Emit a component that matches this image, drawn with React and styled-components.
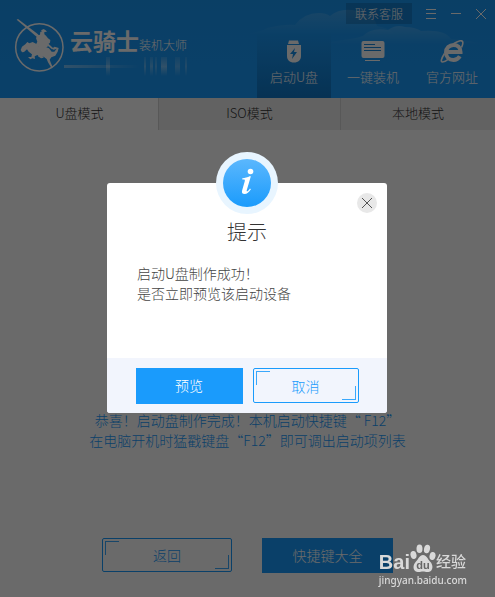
import React from 'react';
import styled, { createGlobalStyle } from 'styled-components';

const GlobalStyle = createGlobalStyle`
  * {
    box-sizing: border-box;
  }

  body {
    background: #fff;
    font-family: "Noto Sans CJK SC", sans-serif;
    font-weight: 300;
    margin: 0;
  }

  button {
    cursor: pointer;
    font-family: inherit;
    font-weight: inherit;
    margin: 0;
    padding: 0;
  }
`;

const Page = styled.div`
  display: flex;
  flex-direction: column;
  min-height: 100vh;
`;

const Header = styled.header`
  background: linear-gradient(#1a98f4, #1a9bfc);
  color: #fff;
  display: flex;
  height: 98px;
  isolation: isolate;
  justify-content: space-between;
  position: relative;
`;

const Sky = styled.svg`
  position: absolute;
  right: 0;
  top: 0;
  z-index: -1;
`;

const Brand = styled.div`
  display: flex;
  padding: 18px 0 0 14px;
`;

const BrandText = styled.div`
  margin-top: 10px;
`;

const BrandName = styled.h1`
  align-items: baseline;
  display: flex;
  font-size: 12px;
  font-weight: 300;
  line-height: 24px;
  margin: 0;
  padding-left: 6px;

  strong {
    font-size: 23px;
    font-weight: 700;
  }
`;

const Glow = styled.svg`
  display: block;
`;

const HeaderSide = styled.div`
  align-items: flex-end;
  display: flex;
  flex-direction: column;
  justify-content: space-between;
`;

const WindowBar = styled.div`
  align-items: center;
  display: flex;
  gap: 13px;
  padding: 3px 8px 0 0;
`;

const SupportButton = styled.button`
  background: rgba(0, 40, 80, 0.22);
  border: 0;
  color: #fff;
  font-size: 12px;
  height: 21px;
  line-height: 20px;
  width: 66px;
`;

const WindowButton = styled.button`
  background: none;
  border: 0;
  color: #fff;
  display: block;
  height: 12px;
  width: 12px;

  svg {
    display: block;
  }
`;

const Nav = styled.nav`
  display: flex;
  gap: 5px;
  padding-right: 6px;
`;

const NavLink = styled.a`
  align-items: center;
  background: ${props => props.$active ? 'linear-gradient(rgba(0, 60, 110, 0), rgba(0, 60, 110, 0.36))' : 'none'};
  color: #fff;
  display: flex;
  flex-direction: column;
  font-size: 13px;
  height: 66px;
  line-height: 20px;
  padding-top: 8px;
  text-decoration: none;
  width: 74px;

  svg {
    margin-bottom: 4px;
  }
`;

const Tabs = styled.div`
  display: grid;
  grid-template-columns: 158fr 182fr 155fr;
`;

const Tab = styled.button`
  background: ${props => props.$active ? '#fff' : '#ececec'};
  border: 0;
  border-left: 1px solid ${props => props.$active ? '#fff' : '#d4d4d4'};
  color: #333;
  font-size: 13px;
  height: 32px;
  line-height: 30px;
  padding-bottom: 2px;
`;

const Content = styled.main`
  align-items: center;
  display: flex;
  flex: 1;
  flex-direction: column;
  justify-content: flex-end;
  padding-bottom: 24px;
`;

const Tip = styled.p`
  color: #1a9bfc;
  font-size: 14px;
  line-height: 20px;
  margin: 0 0 88px;
  text-align: center;
`;

const Actions = styled.div`
  display: flex;
  gap: ${props => props.$gap};
  justify-content: center;
`;

const PrimaryButton = styled.button`
  background: #1a9bfc;
  border: 0;
  color: #fff;
  font-size: 14px;
  height: ${props => props.$wide ? '35px' : '36px'};
  padding-bottom: 2px;
  width: ${props => props.$wide ? '131px' : '107px'};
`;

const OutlineButton = styled.button`
  background: transparent;
  border: 1px solid #1a9bfc;
  border-radius: 2px;
  color: #1a9bfc;
  font-size: 14px;
  height: ${props => props.$wide ? '34px' : '35px'};
  position: relative;
  width: ${props => props.$wide ? '130px' : '106px'};

  &::before,
  &::after {
    border: 0 solid #1a9bfc;
    content: '';
    height: 13px;
    opacity: 0.85;
    position: absolute;
    width: 13px;
  }

  &::before {
    border-width: 1px 0 0 1px;
    left: 2px;
    top: 2px;
  }

  &::after {
    border-width: 0 1px 1px 0;
    bottom: 2px;
    right: 2px;
  }
`;

const Backdrop = styled.div`
  align-items: center;
  background: rgba(0, 0, 0, 0.585);
  display: flex;
  inset: 0;
  justify-content: center;
  padding: 0 1px 1px 0;
  position: fixed;
`;

const Dialog = styled.section`
  background: #fff;
  border-radius: 3px;
  position: relative;
  width: 280px;
`;

const Badge = styled.svg`
  left: 50%;
  position: absolute;
  top: -31px;
  transform: translateX(-50%);
`;

const CloseButton = styled.button`
  background: #e8e8e8;
  border: 0;
  border-radius: 50%;
  color: #555;
  height: 20px;
  position: absolute;
  right: 10px;
  top: 10px;
  width: 20px;

  svg {
    display: block;
    margin: 0 auto;
  }
`;

const DialogBody = styled.div`
  padding: 35px 30px 55px;
`;

const DialogTitle = styled.h2`
  color: #333;
  font-size: 20px;
  font-weight: 300;
  line-height: 28px;
  margin: 0 0 17px;
  text-align: center;
`;

const DialogText = styled.p`
  color: #444;
  font-size: 14px;
  line-height: 20px;
  margin: 0;
`;

const DialogFooter = styled.footer`
  background: #f2f5fd;
  border-radius: 0 0 3px 3px;
  padding: 10px 28px 9px;
`;

const Watermark = styled.div`
  bottom: 9px;
  color: #d9d9d9;
  position: fixed;
  right: 28px;
`;

const WatermarkLogo = styled.div`
  align-items: flex-end;
  display: flex;
  font-size: 15px;
  font-weight: 500;
  line-height: 24px;

  b {
    font-family: "Liberation Sans", sans-serif;
    font-size: 20px;
    line-height: 22px;
  }
`;

const WatermarkUrl = styled.div`
  font-family: "Noto Sans", sans-serif;
  font-size: 10px;
  font-weight: 500;
  line-height: 15px;
`;

const Knight = () => (
  <svg width="50" height="56" viewBox="42 57 150 168" fill="#fff" aria-hidden="true">
    <circle cx="118" cy="145" r="71" fill="none" stroke="#fff" strokeWidth="4.500" />
    <path d="M50 62 L54 60 L112 104 L160 148 L156 151 L108 112Z" />
    <path d="M120 107 L121 99 L126 97 L123 94 L131 90 L137 94 L141 98 L133 99 L133 106 L138 110 L144 118 L151 123 L150 131 L145 135 L142 145 L134 148 L119 146 L107 138 L112 128 L108 117 L113 109Z" />
    <path d="M62 153 L66 143 L76 136 L82 129 L88 133 L98 129 L108 134 L116 143 L135 144 L147 148 L155 158 L163 158 L170 149 L161 152 L155 149 L164 143 L176 147 L173 158 L166 170 L154 175 L149 182 L153 193 L158 204 L153 205 L144 190 L140 180 L131 173 L120 174 L112 168 L104 172 L105 180 L97 178 L91 181 L84 174 L94 174 L96 166 L86 158 L81 151 L72 159 L66 160Z" />
    <path d="M91 153 L100 158 L95 164Z M118 166 L132 176 L123 178 L114 172Z" />
  </svg>
);

const UsbIcon = () => (
  <svg width="16" height="23" viewBox="0 0 16 23" fill="#fff" aria-hidden="true">
    <path d="M3 0.500h9l1 3.500H2z" />
    <path fillRule="evenodd" d="M1 5h14v11c0 4-2.500 6.500-7 6.500S1 20 1 16zM9 8l-5 6h3l-1 5 5-7H8z" />
  </svg>
);

const ScreenIcon = () => (
  <svg width="24" height="23" viewBox="0 0 24 23" aria-hidden="true">
    <rect x="0.500" y="1" width="23" height="17" rx="2" fill="#fff" />
    <path d="M3 4.500h11M3 7.500h17M3 10.500h17" stroke="#1a88dc" />
    <path d="M4 20.500h15" stroke="#fff" />
  </svg>
);

const BrowserIcon = () => (
  <svg width="24" height="23" viewBox="0 0 24 23" fill="none" stroke="#fff" aria-hidden="true">
    <path d="M7 12h13.500C20.500 7.500 17.500 5 13.500 5S6 8 6 12.500 9 20 13.500 20c3 0 5-1.500 6.300-3.800" strokeWidth="4" />
    <path d="M4.500 13.500C1 19 0.500 22 2.500 22c1.500 0 4-1.200 6-2.800M14 3.500C18 .8 21.500 0 22.500 1.500c.8 1.400.2 3.500-1 6" strokeWidth="1.600" />
  </svg>
);

const Cross = () => (
  <svg width="12" height="12" viewBox="0 0 12 12" stroke="currentColor" aria-hidden="true">
    <path d="M1 1l10 10M11 1L1 11" />
  </svg>
);

const Clouds = () => (
  <Sky width="310" height="98" viewBox="0 0 310 98" aria-hidden="true">
    <defs>
      <linearGradient id="cloud" x1="0" y1="0" x2="0" y2="1">
        <stop offset="0" stopColor="#fff" stopOpacity="0.16" />
        <stop offset="1" stopColor="#fff" stopOpacity="0" />
      </linearGradient>
    </defs>
    <path fill="url(#cloud)" d="M55 34q20-1 27-6 18-4 28-3 9-12 24-12 7 0 11 3 11-9 27-5 18 4 20 15 12 2 18 8z" />
    <path fill="url(#cloud)" d="M135 44q18-3 30-5 8-1 13-3 8-9 25-6 8-6 17-3 10 0 16 4 24-2 30 8 20 2 32 5z" />
  </Sky>
);

const glowBars = [[42, 4, 0.35], [80, 2, 0.3], [86, 3, 0.3], [91, 2, 0.25], [97, 6, 0.4], [111, 5, 0.25], [121, 2, 0.25]];

function TitleGlow() {
  return (
    <Glow width="128" height="20" viewBox="0 0 128 20" aria-hidden="true">
      <defs>
        <linearGradient id="beam">
          <stop offset="0" stopColor="#fff" stopOpacity="0.4" />
          <stop offset="1" stopColor="#fff" stopOpacity="0" />
        </linearGradient>
        <linearGradient id="bar" x1="0" y1="0" x2="0" y2="1">
          <stop offset="0" stopColor="#fff" stopOpacity="0.3" />
          <stop offset="0.5" stopColor="#fff" />
          <stop offset="1" stopColor="#fff" stopOpacity="0" />
        </linearGradient>
      </defs>
      <rect y="8" width="75" height="3" fill="url(#beam)" />
      {glowBars.map(([x, width, opacity]) => (
        <rect key={x} x={x} width={width} height="19" fill="url(#bar)" opacity={opacity} />
      ))}
    </Glow>
  );
}

const Paw = () => (
  <svg width="26" height="29" viewBox="0 0 26 29" fill="#d9d9d9" aria-hidden="true">
    <ellipse cx="3.500" cy="11" rx="3" ry="4" transform="rotate(-12 3.500 11)" />
    <ellipse cx="9.500" cy="4.800" rx="3" ry="4.300" />
    <ellipse cx="17" cy="5" rx="3" ry="4.300" transform="rotate(12 17 5)" />
    <ellipse cx="22.500" cy="12" rx="3" ry="4" transform="rotate(12 22.500 12)" />
    <path d="M13 11c3.500 0 4.500 4 7 6.500 3.500 3.300 3.500 9.500-1.500 10.500-2.500.4-3.500-.5-5.500-.5s-3 .9-5.500.5c-5-1-5-7-1.500-10.500C8.500 15 9.500 11 13 11z" />
    <text x="13" y="25" fill="#666" fontFamily="Liberation Sans, sans-serif" fontSize="11" fontWeight="700" textAnchor="middle">du</text>
  </svg>
);

export default function App() {
  return (
    <>
      <GlobalStyle />
      <Page>
        <Header>
          <Clouds />
          <Brand>
            <Knight />
            <BrandText>
              <BrandName><strong>云骑士</strong>装机大师</BrandName>
              <TitleGlow />
            </BrandText>
          </Brand>
          <HeaderSide>
            <WindowBar>
              <SupportButton type="button">联系客服</SupportButton>
              <WindowButton type="button" aria-label="菜单">
                <svg width="12" height="12" viewBox="0 0 12 12" stroke="currentColor">
                  <path d="M1 1.500h10M1 5.500h10M1 10.500h10" />
                </svg>
              </WindowButton>
              <WindowButton type="button" aria-label="最小化">
                <svg width="12" height="12" viewBox="0 0 12 12" stroke="currentColor">
                  <path d="M1 5.500h10" />
                </svg>
              </WindowButton>
              <WindowButton type="button" aria-label="关闭"><Cross /></WindowButton>
            </WindowBar>
            <Nav>
              <NavLink href="#usb" $active><UsbIcon />启动U盘</NavLink>
              <NavLink href="#install"><ScreenIcon />一键装机</NavLink>
              <NavLink href="#site"><BrowserIcon />官方网址</NavLink>
            </Nav>
          </HeaderSide>
        </Header>
        <Tabs>
          <Tab type="button" $active>U盘模式</Tab>
          <Tab type="button">ISO模式</Tab>
          <Tab type="button">本地模式</Tab>
        </Tabs>
        <Content>
          <Tip>
            恭喜！启动盘制作完成！本机启动快捷键“ F12”<br />
            在电脑开机时猛戳键盘“F12”即可调出启动项列表
          </Tip>
          <Actions $gap="30px">
            <OutlineButton type="button" $wide>返回</OutlineButton>
            <PrimaryButton type="button" $wide>快捷键大全</PrimaryButton>
          </Actions>
        </Content>
      </Page>

      <Backdrop>
        <Dialog role="dialog" aria-modal="true" aria-labelledby="dialog-title">
          <Badge width="62" height="62" viewBox="0 0 62 62" aria-hidden="true">
            <defs>
              <linearGradient id="badge" x1="0" y1="0" x2="0" y2="1">
                <stop offset="0" stopColor="#5bb7fd" />
                <stop offset="1" stopColor="#1a9bfc" />
              </linearGradient>
            </defs>
            <circle cx="31" cy="31" r="31" fill="#e8f5ff" />
            <circle cx="31" cy="31" r="24" fill="url(#badge)" />
            <circle cx="34.500" cy="19.500" r="2.800" fill="#fff" />
            <path fill="#fff" d="M26.300 26.200c2.600-.1 5-.7 7.800-2.200l.7.400-4 13.700c-.4 1.500.2 1.700 1 1 .8-.6 1.500-1.500 2.200-2.500l.9.600c-1.900 3.100-4 4.800-6.300 4.800-2.200 0-3.100-1.400-2.500-3.600l2.600-9c.4-1.400.1-2-1-2h-1.400z" />
          </Badge>
          <CloseButton type="button" aria-label="关闭提示"><Cross /></CloseButton>
          <DialogBody>
            <DialogTitle id="dialog-title">提示</DialogTitle>
            <DialogText>
              启动U盘制作成功！<br />
              是否立即预览该启动设备
            </DialogText>
          </DialogBody>
          <DialogFooter>
            <Actions $gap="10px">
              <PrimaryButton type="button">预览</PrimaryButton>
              <OutlineButton type="button">取消</OutlineButton>
            </Actions>
          </DialogFooter>
        </Dialog>
      </Backdrop>

      <Watermark>
        <WatermarkLogo><b>Bai</b><Paw />经验</WatermarkLogo>
        <WatermarkUrl>jingyan.baidu.com</WatermarkUrl>
      </Watermark>
    </>
  );
}
